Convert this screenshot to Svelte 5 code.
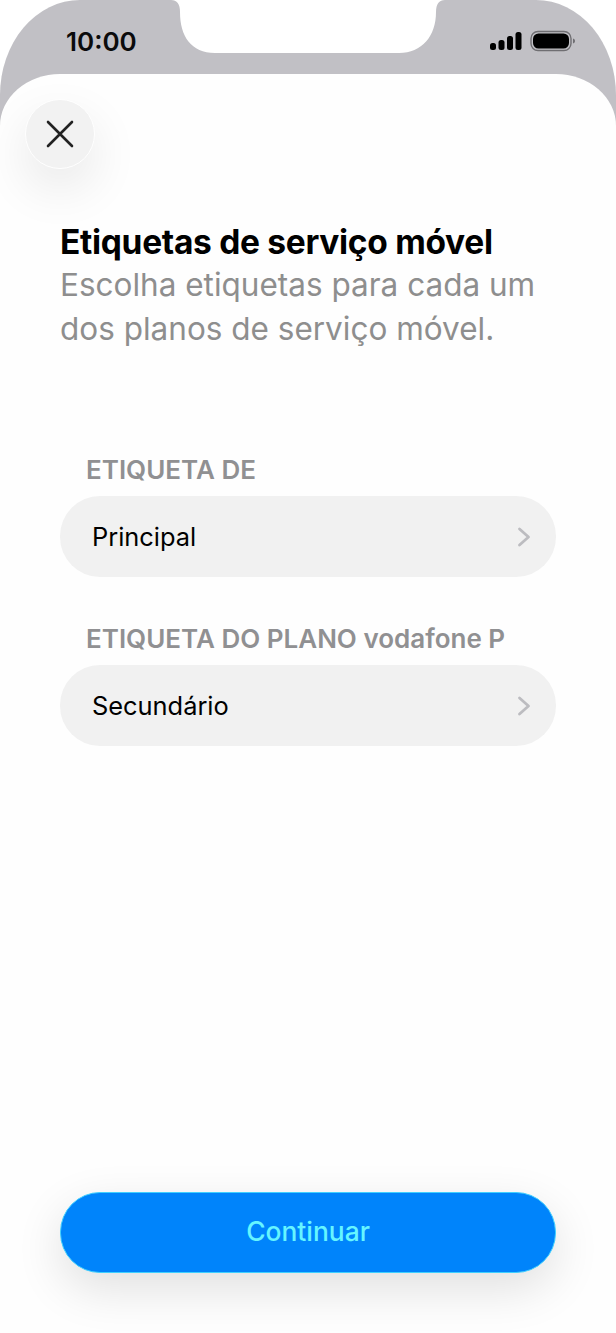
<script>
	const fields = [
		{ label: 'ETIQUETA DE', value: 'Principal' },
		{ label: 'ETIQUETA DO PLANO vodafone P', value: 'Secundário' }
	];
</script>

<div class="phone">
	<header class="status">
		<span class="time">10:00</span>
		<svg class="notch" width="274" height="54" viewBox="0 0 274 54">
			<path d="M0 0H274C268 0 265 4 265 12C265 36 251 53 228 53H44C20 53 9 36 9 12C9 4 6 0 0 0Z" fill="#fff" />
		</svg>
		<div class="indicators">
			<svg width="32" height="20" viewBox="0 0 32 20">
				<rect x="0" y="12" width="6" height="7" rx="2.5" />
				<rect x="8.5" y="9" width="6" height="10" rx="2.5" />
				<rect x="17" y="5" width="6" height="14" rx="2.5" />
				<rect x="25.5" y="1" width="6" height="18" rx="2.5" />
			</svg>
			<svg width="46" height="22" viewBox="0 0 46 22">
				<rect x="1" y="1.5" width="40" height="19" rx="7" fill="none" stroke="#6f6e72" stroke-width="1.4" />
				<rect x="3" y="3.5" width="36" height="15" rx="5.5" />
				<path d="M43 8.5C44.5 9 45 10 45 11C45 12 44.5 13 43 13.5Z" fill="#6f6e72" />
			</svg>
		</div>
	</header>

	<main class="sheet">
		<button class="close" aria-label="Fechar">
			<svg width="32" height="32" viewBox="0 0 32 32">
				<path d="M4 4L28 28M28 4L4 28" fill="none" stroke="#222" stroke-width="2.6" stroke-linecap="round" />
			</svg>
		</button>

		<h1>Etiquetas de serviço móvel</h1>
		<p class="subtitle">Escolha etiquetas para cada um dos planos de serviço móvel.</p>

		<div class="fields">
			{#each fields as field}
				<section class="field">
					<h2>{field.label}</h2>
					<div class="select">
						<span>{field.value}</span>
						<svg width="14" height="20" viewBox="0 0 14 20">
							<path d="M2.5 2L11.5 10L2.5 18" fill="none" stroke="#bcbcc0" stroke-width="2.8" stroke-linecap="round" stroke-linejoin="round" />
						</svg>
					</div>
				</section>
			{/each}
		</div>

		<div class="footer">
			<button class="primary">Continuar</button>
		</div>
	</main>
</div>

<style>
	:global(body) {
		background: #fff;
	}

	.phone {
		position: relative;
		display: flex;
		flex-direction: column;
		height: 1333px;
		overflow: hidden;
		border-radius: 80px 80px 0 0 / 95px 95px 0 0;
		background: linear-gradient(#c1c0c5 0 200px, #fefefe 200px);
		font-family: Inter, "Liberation Sans", sans-serif;
	}

	.status {
		position: relative;
		display: flex;
		justify-content: space-between;
		align-items: center;
		flex: 0 0 74px;
		box-sizing: border-box;
		height: 74px;
		padding: 8px 40px 0 66px;
	}

	.time {
		font-size: 26px;
		font-weight: 600;
		color: #0b0b0c;
	}

	.notch {
		position: absolute;
		top: 0;
		left: 171px;
	}

	.indicators {
		display: flex;
		align-items: center;
		gap: 8px;
	}

	.sheet {
		position: relative;
		display: flex;
		flex-direction: column;
		flex: 1;
		padding: 147px 60px 60px;
		border-radius: 60px 60px 0 0 / 52px 52px 0 0;
		background: #fefefe;
	}

	.close {
		position: absolute;
		top: 25px;
		left: 25px;
		display: flex;
		align-items: center;
		justify-content: center;
		width: 70px;
		height: 70px;
		padding: 0;
		border: 1.5px solid #fff;
		border-radius: 50%;
		background: #f2f2f2;
		box-shadow: 0 20px 50px rgba(0, 0, 0, 0.09);
	}

	h1 {
		margin: 0;
		font-size: 33.5px;
		line-height: 42px;
		font-weight: 700;
		letter-spacing: -0.3px;
		color: #000;
	}

	.subtitle {
		margin: 0;
		font-size: 31.5px;
		line-height: 44px;
		color: #8e8e8e;
	}

	.fields {
		display: flex;
		flex-direction: column;
		gap: 46px;
		margin-top: 103px;
	}

	.field h2 {
		margin: 0 0 10px 26px;
		font-size: 26px;
		line-height: 32px;
		font-weight: 600;
		color: #909092;
	}

	.select {
		display: flex;
		align-items: center;
		justify-content: space-between;
		height: 81px;
		padding: 0 25px 0 32px;
		border-radius: 40px;
		background: #f1f1f1;
		font-size: 25.4px;
		color: #000;
	}

	.footer {
		margin-top: auto;
	}

	.primary {
		display: block;
		width: 100%;
		height: 81px;
		padding-bottom: 4px;
		border: 1px solid #3fd0ff;
		border-radius: 40px;
		background: #0084fb;
		color: #66f5ff;
		font-family: inherit;
		font-size: 26.4px;
		font-weight: 500;
		box-shadow: 0 16px 48px rgba(0, 0, 0, 0.12);
	}
</style>
